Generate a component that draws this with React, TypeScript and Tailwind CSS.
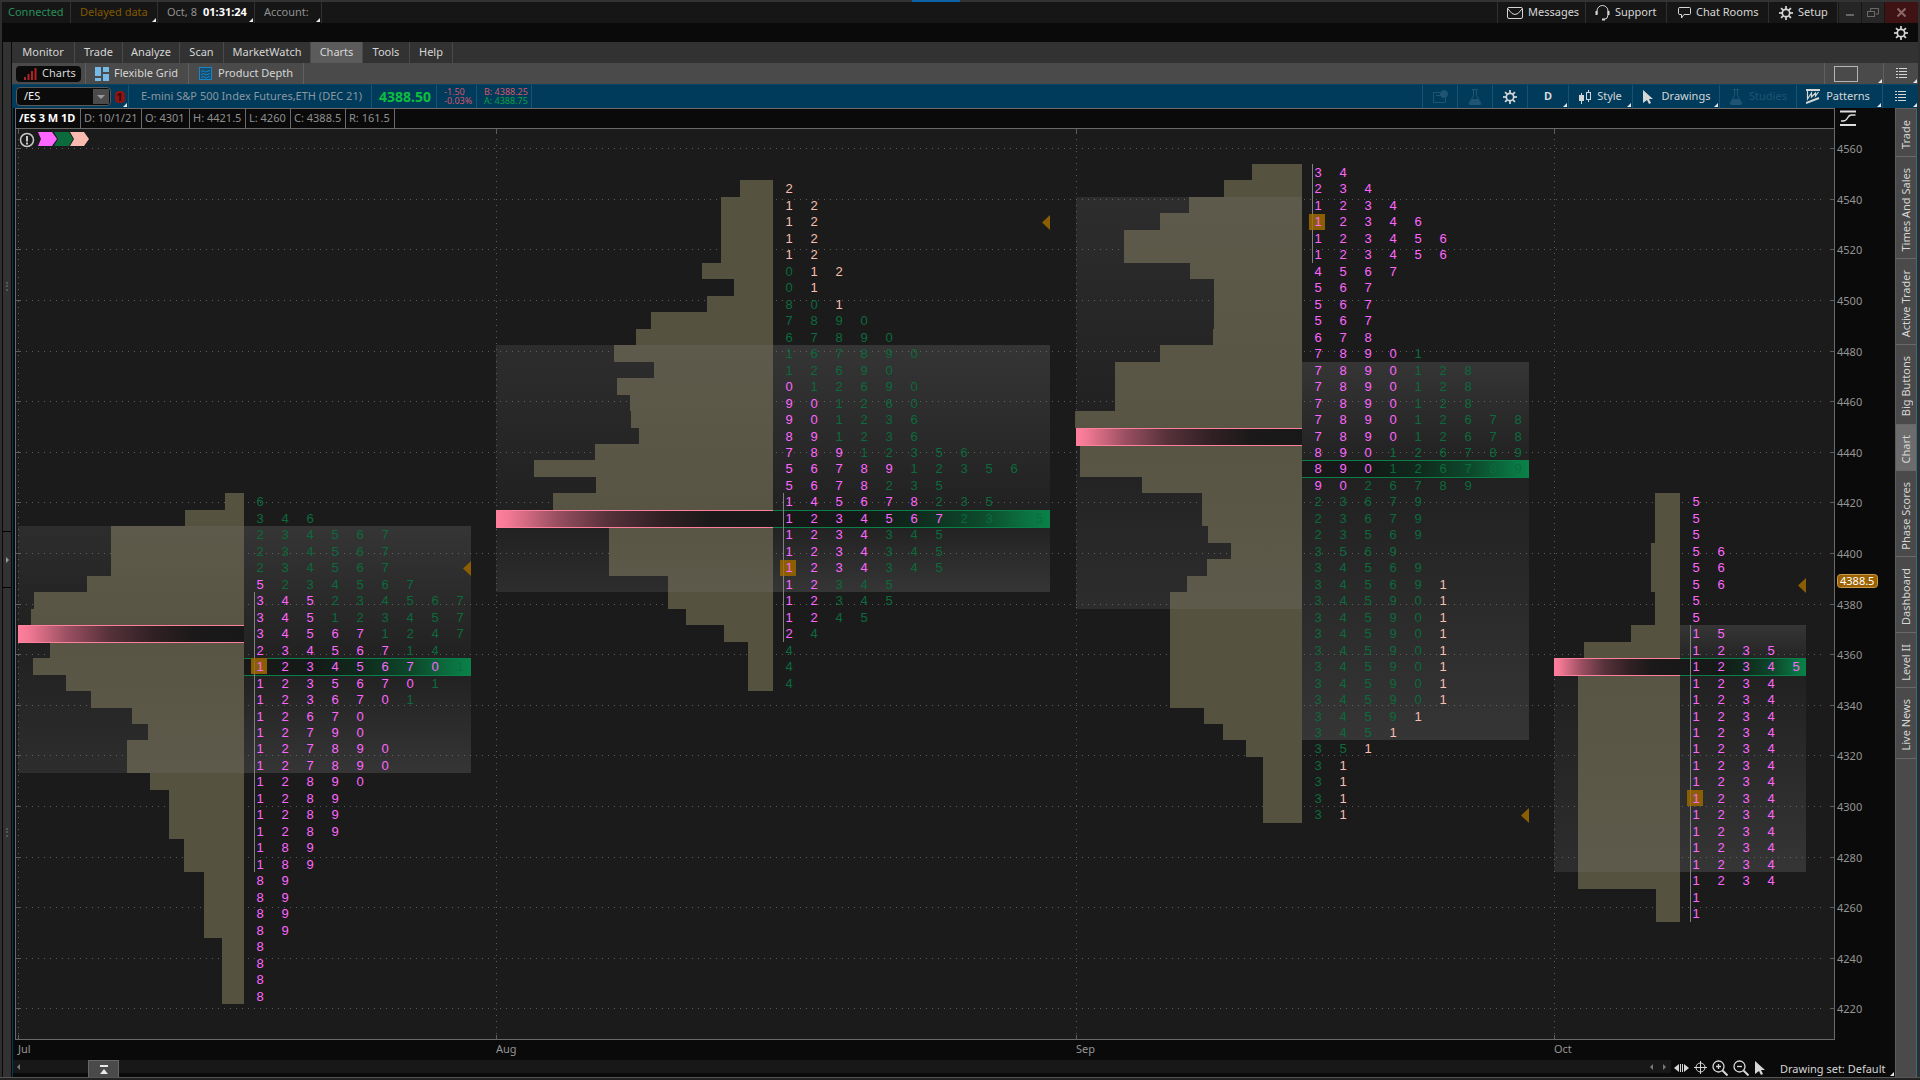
import React from 'react';

const ROW_TOP = 164;
const ROW_H = 16.47;
const rowY = (k: number) => Math.round(ROW_TOP + ROW_H * k);

// [number of rows, left edge of the volume bar]; null is the volume POC row
type Bar = [number, number | null];

// "m" = magenta month digits, "g" = green, "p" = peach
type Row = [number, string];

interface Profile {
  start: number;
  left: number;
  mid: number;
  right: number;
  bars: Bar[];
  rows: Row[];
  volPoc: number;
  tpoPoc: number;
  volArea: [number, number];
  tpoArea: [number, number];
  digitX: number;
  line: [number, number];
  open: number;
  close: number;
}

const COLORS: Record<string, string> = { m: '#ff66ff', g: '#0b6b3c', p: '#f9bfb0' };

const PROFILES: Profile[] = [
  {
    start: 20, left: 18, mid: 244, right: 471, volPoc: 28, tpoPoc: 30,
    volArea: [22, 37], tpoArea: [22, 37], digitX: 260, line: [26, 43], open: 30, close: 24,
    bars: [[1, 225], [1, 185], [3, 111], [1, 87], [1, 34], [1, 31], [1, null], [1, 50], [1, 33], [1, 66], [1, 91], [1, 132], [1, 148], [2, 127], [1, 150], [3, 169], [2, 184], [4, 204], [4, 222]],
    rows: [[1, 'g6'], [1, 'g346'], [3, 'g234567'], [1, 'm5g234567'], [1, 'm345g234567'], [1, 'm345g123457'], [1, 'm34567g1247'], [1, 'm234567g14'], [1, 'm12345670g1'], [1, 'm1235670g1'], [1, 'm123670g1'], [1, 'm12670'], [1, 'm12790'], [2, 'm127890'], [1, 'm12890'], [3, 'm1289'], [2, 'm189'], [4, 'm89'], [4, 'm8']],
  },
  {
    start: 1, left: 496, mid: 773, right: 1050, volPoc: 21, tpoPoc: 21,
    volArea: [11, 26], tpoArea: [11, 26], digitX: 789, line: [20, 29], open: 24, close: 3,
    bars: [[1, 740], [4, 721], [1, 702], [1, 734], [1, 707], [1, 651], [1, 636], [1, 614], [1, 654], [1, 617], [1, 630], [1, 631], [1, 639], [1, 595], [1, 534], [1, 596], [1, 553], [1, null], [3, 609], [2, 668], [1, 686], [1, 724], [3, 748]],
    rows: [[1, 'p2'], [4, 'p12'], [1, 'g0p12'], [1, 'g0p1'], [1, 'g80p1'], [1, 'g7890'], [1, 'g67890'], [1, 'g167890'], [1, 'g12690'], [1, 'm0g12690'], [1, 'm90g1260'], [1, 'm90g1236'], [1, 'm89g1236'], [1, 'm789g12356'], [1, 'm56789g12356'], [1, 'm5678g235'], [1, 'm145678g235'], [1, 'm1234567g2345'], [3, 'm1234g345'], [2, 'm12g345'], [1, 'm12g45'], [1, 'm2g4'], [3, 'g4']],
  },
  {
    start: 0, left: 1076, mid: 1302, right: 1529, volPoc: 16, tpoPoc: 18,
    volArea: [2, 27], tpoArea: [12, 35], digitX: 1318, line: [0, 6], open: 3, close: 39,
    bars: [[1, 1252], [1, 1224], [1, 1189], [1, 1160], [2, 1124], [1, 1190], [3, 1214], [1, 1213], [1, 1160], [3, 1115], [1, 1075], [1, null], [2, 1080], [1, 1142], [2, 1202], [1, 1208], [1, 1231], [1, 1207], [1, 1187], [7, 1170], [1, 1204], [1, 1223], [1, 1246], [4, 1263]],
    rows: [[1, 'm34'], [1, 'm234'], [1, 'm1234'], [1, 'm12346'], [2, 'm123456'], [1, 'm4567'], [3, 'm567'], [1, 'm678'], [1, 'm7890g1'], [3, 'm7890g128'], [2, 'm7890g12678'], [2, 'm890g126789'], [1, 'm90g26789'], [2, 'g23679'], [1, 'g23569'], [1, 'g3569'], [1, 'g34569'], [1, 'g34569p1'], [7, 'g34590p1'], [1, 'g3459p1'], [1, 'g345p1'], [1, 'g35p1'], [4, 'g3p1']],
  },
  {
    start: 20, left: 1554, mid: 1680, right: 1806, volPoc: 30, tpoPoc: 30,
    volArea: [30, 43], tpoArea: [28, 43], digitX: 1696, line: [28, 46], open: 38, close: 25,
    bars: [[3, 1655], [3, 1651], [2, 1655], [1, 1631], [1, 1584], [1, null], [13, 1578], [2, 1656]],
    rows: [[3, 'm5'], [3, 'm56'], [2, 'm5'], [1, 'm15'], [1, 'm1235'], [1, 'm12345'], [13, 'm1234'], [2, 'm1']],
  },
];

const PRICES = Array.from({ length: 18 }, (_, i) => 4560 - i * 20);
const priceY = (p: number) => Math.round(148.1 + (4560 - p) * 2.53);
const MONTHS = [{ x: 18, name: 'Jul' }, { x: 496, name: 'Aug' }, { x: 1076, name: 'Sep' }, { x: 1554, name: 'Oct' }];

const AreaGradient = ({ id, area, poc, peak }: { id: string; area: [number, number]; poc: number; peak: number }) => {
  const mid = (poc + 0.5 - area[0]) / (area[1] - area[0]);
  return (
    <linearGradient id={id} x1="0" y1="0" x2="0" y2="1">
      <stop offset="0" stopColor="#808080" stopOpacity={peak} />
      <stop offset={mid} stopColor="#808080" stopOpacity={0.05} />
      <stop offset="1" stopColor="#808080" stopOpacity={peak} />
    </linearGradient>
  );
};

const digitsOf = (text: string) => {
  const out: { d: string; color: string }[] = [];
  let color = COLORS.m;
  for (const ch of text) {
    if (COLORS[ch]) color = COLORS[ch];
    else out.push({ d: ch, color });
  }
  return out;
};

const ProfileBars = ({ p }: { p: Profile }) => {
  let k = p.start;
  return (
    <g fill="#565240" shapeRendering="crispEdges">
      {p.bars.map(([n, x], i) => {
        const y = rowY(k);
        k += n;
        return x === null ? null : <rect key={i} x={x} y={y} width={p.mid - x} height={rowY(k) - y} />;
      })}
    </g>
  );
};

const ProfileMarks = ({ p, i }: { p: Profile; i: number }) => {
  const poc = rowY(p.volPoc);
  const tpo = rowY(p.tpoPoc);
  const openY = Math.ceil(ROW_TOP + ROW_H * p.open - 0.2);
  const closeY = rowY(p.close + 0.6);
  let k = p.start;
  return (
    <g>
      <g shapeRendering="crispEdges">
        <rect x={p.left} y={rowY(p.volArea[0])} width={p.mid - p.left} height={rowY(p.volArea[1]) - rowY(p.volArea[0])} fill={`url(#vol${i})`} />
        <rect x={p.mid} y={rowY(p.tpoArea[0])} width={p.right - p.mid} height={rowY(p.tpoArea[1]) - rowY(p.tpoArea[0])} fill={`url(#tpo${i})`} />
        <rect x={p.left} y={poc} width={p.mid - p.left} height={18} fill="#ff7f9d" />
        <rect x={p.left} y={poc + 1} width={p.mid - p.left} height={16} fill="url(#pink)" />
        <rect x={p.mid} y={tpo} width={p.right - p.mid} height={18} fill="#0a8048" />
        <rect x={p.mid} y={tpo + 1} width={p.right - p.mid} height={16} fill="url(#green)" />
        <rect x={p.digitX - 6} y={rowY(p.line[0])} width={1} height={rowY(p.line[1]) - rowY(p.line[0])} fill="#808080" />
        <rect x={p.digitX - 9} y={openY} width={16} height={16} fill="#8b5e04" />
        <rect x={p.digitX - 6} y={openY} width={1} height={16} fill="#9a7227" />
      </g>
      <path d={`M${p.right} ${closeY - 8}v15l-8-7.500z`} fill="#8b5e04" />
      <g fontFamily="'Liberation Sans', Arial, sans-serif" fontSize="13" textAnchor="middle">
        {p.rows.flatMap(([n, text]) =>
          Array.from({ length: n }, () => {
            const row = k++;
            return digitsOf(text).map((c, j) => (
              <text key={`${row}-${j}`} x={p.digitX + j * 25} y={rowY(row) + 13} fill={c.color}>{c.d}</text>
            ));
          })
        )}
      </g>
    </g>
  );
};

const Plot = () => (
  <svg className="block w-full h-full" aria-label="TPO profile chart">
    <defs>
      <linearGradient id="pink">
        <stop offset="0" stopColor="#ff7f9d" />
        <stop offset="0.04" stopColor="#f57a96" />
        <stop offset="0.22" stopColor="#994f60" />
        <stop offset="0.4" stopColor="#57323b" />
        <stop offset="0.6" stopColor="#302024" />
        <stop offset="0.78" stopColor="#1b1919" />
        <stop offset="1" stopColor="#181818" />
      </linearGradient>
      <linearGradient id="green">
        <stop offset="0" stopColor="#181818" />
        <stop offset="0.3" stopColor="#141a17" />
        <stop offset="0.5" stopColor="#10281c" />
        <stop offset="0.75" stopColor="#0d4a2c" />
        <stop offset="0.95" stopColor="#0a7a45" />
        <stop offset="1" stopColor="#0a8048" />
      </linearGradient>
      {PROFILES.map((p, i) => (
        <React.Fragment key={i}>
          <AreaGradient id={`vol${i}`} area={p.volArea} poc={p.volPoc} peak={0.18} />
          <AreaGradient id={`tpo${i}`} area={p.tpoArea} poc={p.tpoPoc} peak={0.26} />
        </React.Fragment>
      ))}
    </defs>
    <g transform="translate(-16 -129)">
      <g stroke="#5c5c5c" shapeRendering="crispEdges">
        {PRICES.map((v) => (
          <g key={v}>
            <line x1="20" x2="1822" y1={priceY(v) + 0.5} y2={priceY(v) + 0.5} strokeDasharray="1 5" />
            <line x1="16" x2="21" y1={priceY(v) + 0.5} y2={priceY(v) + 0.5} />
            <line x1="1830" x2="1834" y1={priceY(v) + 0.5} y2={priceY(v) + 0.5} />
          </g>
        ))}
        {MONTHS.map((m) => (
          <g key={m.name}>
            <line x1={m.x + 0.5} x2={m.x + 0.5} y1="139" y2="1034" strokeDasharray="1 5" />
            <line x1={m.x + 0.5} x2={m.x + 0.5} y1="129" y2="134" />
            <line x1={m.x + 0.5} x2={m.x + 0.5} y1="1035" y2="1039" />
          </g>
        ))}
      </g>
      {PROFILES.map((p, i) => <ProfileBars key={i} p={p} />)}
      {PROFILES.map((p, i) => <ProfileMarks key={i} p={p} i={i} />)}
      <g fill="none" stroke="#c8c8c8" strokeWidth="1.500">
        <circle cx="27" cy="140" r="6.500" />
        <path d="M27 136v5.500M27 142.500v2" strokeWidth="2" />
      </g>
      <path d="M38 132h14l5 7-5 7H38l3-7z" fill="#ff66ff" />
      <path d="M54 132h15l4 7-4 7H54l4-7z" fill="#0b6b3c" />
      <path d="M70 132h14l5 7-5 7H70l4-7z" fill="#f9bbb0" />
    </g>
  </svg>
);

const PriceAxis = () => (
  <svg className="block w-full h-full font-['Noto_Sans',sans-serif]" aria-label="Price axis">
    <g transform="translate(-1835 -108)">
      <path d="M1840 111.500h16M1840 125h16" stroke="#ddd" strokeWidth="2" />
      <path d="M1841 121h2q3 0 4.500-3t4-3h4" fill="none" stroke="#ddd" strokeWidth="1.300" />
      {PRICES.map((v) => (
        <text key={v} x="1837" y={priceY(v) + 5} fontSize="11" fill="#959595">{v}</text>
      ))}
      <rect x="1837.500" y="574.500" width="40" height="13" rx="3" fill="#9c6200" stroke="#c99a4e" />
      <text x="1840" y="585" fontSize="11" fill="#fff">4388.5</text>
    </g>
  </svg>
);

const Gear = () => (
  <svg width="14" height="14" viewBox="0 0 14 14" fill="none" stroke="currentColor">
    <circle cx="7" cy="7" r="3.700" strokeWidth="1.700" />
    {[0, 45, 90, 135, 180, 225, 270, 315].map((a) => (
      <path key={a} d="M7 0v3" strokeWidth="1.700" transform={`rotate(${a} 7 7)`} />
    ))}
  </svg>
);

const Flask = () => (
  <svg width="14" height="16" viewBox="0 0 14 16" fill="none" stroke="currentColor">
    <path d="M4 .5h6M5.500 1v5.500L1 14.500q0 1 1 1h10q1 0 1-1L8.500 6.500V1" />
    <path d="M4 10h6l3 5H1z" fill="currentColor" stroke="none" />
  </svg>
);

const ListIcon = () => (
  <svg width="11" height="11" viewBox="0 0 11 11" fill="currentColor" shapeRendering="crispEdges">
    {[0, 3, 6, 9].map((y) => (
      <g key={y}><rect y={y} width="2" height="1" /><rect x="3" y={y} width="8" height="1" /></g>
    ))}
  </svg>
);

const Cursor = () => (
  <svg width="12" height="14" viewBox="0 0 12 14" fill="currentColor">
    <path d="M1 0l10 9H7l2 4-2 1-2-4-4 3z" />
  </svg>
);

const Corner = () => <span className="absolute right-px bottom-px border-b-4 border-l-4 border-b-gray-200 border-l-transparent" />;

const TOP = 'relative flex h-full items-center border-r border-[#303030]';
const TOOL = 'relative flex h-full items-center justify-center border-l border-[#1a5271]';

const StatusBar = () => (
  <header className="flex h-[21px] shrink-0 items-stretch bg-[#161616]">
    <div className={`${TOP} w-[69px] pl-[6px] text-[#27905a]`}>Connected</div>
    <button className={`${TOP} w-[87px] pl-[9px] text-[#815800]`}>Delayed data<Corner /></button>
    <button className={`${TOP} w-[97px] pl-[9px] text-[#909090]`}>
      Oct, 8<b className="ml-[6px] text-white">01:31:24</b><Corner />
    </button>
    <button className={`${TOP} w-[67px] pl-[9px] text-[#909090]`}>Account:<Corner /></button>
    <div className="flex-1 border-r border-[#303030]" />
    <button className={`${TOP} w-[88px] gap-[5px] pl-[9px]`}>
      <svg width="16" height="12" viewBox="0 0 16 12" fill="none" stroke="currentColor"><rect x=".5" y=".5" width="15" height="11" rx="1.500" /><path d="M1 2l4 4.500q3 2 6 0L15 2" /></svg>
      Messages
    </button>
    <button className={`${TOP} w-[81px] gap-[5px] pl-[9px]`}>
      <svg width="15" height="16" viewBox="0 0 15 16" fill="none" stroke="currentColor"><path d="M2 9V6a5.500 5.500 0 0 1 11 0v4q0 4-4 4.500" /><path d="M1.500 6v4M13.500 6v4" strokeWidth="2" /><path d="M7 14.500h3" strokeWidth="2" /></svg>
      Support
    </button>
    <button className={`${TOP} w-[102px] gap-[5px] pl-[11px]`}>
      <svg width="13" height="12" viewBox="0 0 13 12" fill="none" stroke="currentColor"><path d="M2 .5h9.500q1 0 1 1v5q0 1-1 1H6L3.500 11V7.500H2q-1.500 0-1.500-1v-5q0-1 1.500-1z" /></svg>
      Chat Rooms
    </button>
    <button className={`${TOP} w-[69px] gap-[5px] pl-[10px]`}><Gear />Setup</button>
    <button aria-label="Minimize" className="ml-px flex w-[22px] items-center justify-center bg-[#262626]"><span className="mt-1 h-[2px] w-2 bg-[#666]" /></button>
    <button aria-label="Restore" className="ml-px flex w-[22px] items-center justify-center bg-[#262626] text-[#6a6a6a]">
      <svg width="12" height="10" viewBox="0 0 12 10" fill="none" stroke="currentColor"><path d="M3.500 3V.5h8v5.500H8.500" /><rect x=".5" y="3.500" width="7" height="5" /></svg>
    </button>
    <button aria-label="Close" className="ml-px flex w-[33px] items-center justify-center bg-[#3f1214] text-[#8e6768]">
      <svg width="9" height="9" viewBox="0 0 9 9" stroke="currentColor" strokeWidth="2"><path d="M.5.5l8 8M8.500.5l-8 8" /></svg>
    </button>
  </header>
);

const TABS = [
  { name: 'Monitor', w: 'w-[63px]' },
  { name: 'Trade', w: 'w-[48px]' },
  { name: 'Analyze', w: 'w-[57px]' },
  { name: 'Scan', w: 'w-[44px]' },
  { name: 'MarketWatch', w: 'w-[87px]' },
  { name: 'Charts', w: 'w-[52px]' },
  { name: 'Tools', w: 'w-[47px]' },
  { name: 'Help', w: 'w-[43px]' },
];

const MainTabs = () => (
  <nav className="flex h-[21px] shrink-0 bg-[#323232]">
    {TABS.map((t) => (
      <button key={t.name} className={`${t.w} border-r border-[#4a4a4a] ${t.name === 'Charts' ? 'bg-[#5b5b5b]' : ''}`}>{t.name}</button>
    ))}
  </nav>
);

const SubTabs = () => (
  <nav className="flex h-[21px] shrink-0 items-center bg-[#4a4a4a]">
    <div className="flex h-full w-[74px] items-center border-r border-[#606060] pl-1">
      <button className="flex h-4 w-[65px] items-center gap-[5px] rounded bg-[#0b0b0b] pl-2">
        <svg width="13" height="12" viewBox="0 0 13 12" fill="#b02426"><rect y="9" width="2" height="3" /><rect x="3.500" y="6" width="2" height="6" /><rect x="7" y="3" width="2" height="9" /><rect x="10.500" width="2" height="12" /></svg>
        Charts
      </button>
    </div>
    <button className="flex h-full w-[103px] items-center gap-[5px] border-r border-[#606060] pl-[9px]">
      <svg width="14" height="14" viewBox="0 0 14 14" fill="#74b9e8"><rect width="6" height="9" /><rect x="8" width="6" height="5" /><rect y="11" width="6" height="3" /><rect x="8" y="7" width="6" height="7" /></svg>
      Flexible Grid
    </button>
    <button className="flex h-full w-[115px] items-center gap-[6px] border-r border-[#606060] pl-[10px]">
      <svg width="13" height="13" viewBox="0 0 13 13" fill="none" stroke="#1887c9"><rect x=".5" y=".5" width="12" height="12" fill="#174d6b" /><path d="M2 5l2-1.500L6.500 5 11 3.500M2 8l2-1.500L7 8l4-1.500M2 11l2-1.500 3 1.500 4-1.500" /></svg>
      Product Depth
    </button>
    <div className="flex-1" />
    <button aria-label="Grid layout" className="relative flex h-full w-[59px] items-center border-l border-[#606060] pl-[9px]">
      <span className="h-4 w-6 border border-[#b4b4b4]" /><Corner />
    </button>
    <button aria-label="Layout menu" className="relative flex h-full w-[35px] items-center justify-center border-l border-[#606060]"><ListIcon /><Corner /></button>
  </nav>
);

const Toolbar = () => (
  <div className="flex h-6 shrink-0 items-center border-t border-[#0d4362] bg-[#003b5c]">
    <div className="ml-1 flex h-[19px] w-[95px] rounded-sm border border-[#5a5a5a] bg-[#0b0b0b] p-px">
      <input aria-label="Symbol" defaultValue="/ES" className="min-w-0 flex-1 bg-transparent pl-[6px] text-[11px] text-gray-100 outline-none" />
      <button aria-label="Symbol list" className="flex w-4 items-center justify-center bg-[#4b4b4b]">
        <span className="border-x-4 border-t-4 border-x-transparent border-t-[#999]" />
      </button>
    </div>
    <button className="relative flex h-full w-[18px] items-center justify-center border-r border-[#1a5271]">
      <span className="h-3 w-[10px] rounded-sm bg-[#8e1414] text-center text-[11px] leading-3 font-bold text-[#350808]">1</span><Corner />
    </button>
    <div className="flex h-full w-[243px] items-center border-r border-[#1a5271] pl-3 whitespace-nowrap text-[#8b969e]">E-mini S&amp;P 500 Index Futures,ETH (DEC 21)</div>
    <div className="flex h-full w-[65px] items-center border-r border-[#1a5271] pl-[7px] text-sm font-bold text-[#0dbf3c]">4388.50</div>
    <div className="h-full w-10 border-r border-[#1a5271] pt-[2px] pl-[7px] text-[9px] leading-[9px] text-[#d65565]">-1.50<br />-0.03%</div>
    <div className="h-full w-[55px] border-r border-[#1a5271] pt-[2px] pl-[7px] text-[9px] leading-[9px] text-[#d65565]">B: 4388.25<br /><span className="text-[#0ba13f]">A: 4388.75</span></div>
    <div className="flex-1" />
    <button aria-label="Alerts" className={`${TOOL} w-[35px] text-[#1f5473]`}>
      <svg width="15" height="13" viewBox="0 0 15 13" fill="none" stroke="currentColor"><path d="M7 2.500H.5v10h12V8" /><circle cx="11" cy="4" r="3.500" fill="currentColor" /><path d="M3 5.500h5" /></svg>
    </button>
    <button aria-label="Lab" className={`${TOOL} w-[35px] text-[#1f5473]`}><Flask /></button>
    <button aria-label="Settings" className={`${TOOL} w-[35px]`}><Gear /></button>
    <button className={`${TOOL} w-[41px] text-[11px] font-bold`}>D<Corner /></button>
    <button className={`${TOOL} w-[64px] gap-[6px]`}>
      <svg width="12" height="14" viewBox="0 0 12 14" fill="none" stroke="currentColor"><rect x=".5" y="5.500" width="4" height="5" fill="currentColor" /><path d="M2.500 3v11M9.500 0v2.500M9.500 9.500V12" /><rect x="7.500" y="2.500" width="4" height="7" /></svg>
      Style<Corner />
    </button>
    <button className={`${TOOL} w-[87px] gap-2`}><Cursor />Drawings<Corner /></button>
    <button className={`${TOOL} w-[77px] gap-[6px] text-[#1f5473]`} disabled><Flask />Studies</button>
    <button className={`${TOOL} w-[86px] gap-[6px] pr-[3px]`}>
      <svg width="14" height="15" viewBox="0 0 14 15" fill="none" stroke="currentColor"><path d="M0 1h14M0 14l13-5" strokeWidth="2" /><path d="M1.500 2v8l4-6v4l4-4v3l3-4" strokeWidth="1.200" /></svg>
      Patterns<Corner />
    </button>
    <button aria-label="Chart menu" className={`${TOOL} w-9`}><ListIcon /><Corner /></button>
  </div>
);

const QUOTE = [
  { t: 'D: 10/1/21', w: 'w-[61px]' },
  { t: 'O: 4301', w: 'w-[48px]' },
  { t: 'H: 4421.5', w: 'w-[56px]' },
  { t: 'L: 4260', w: 'w-[45px]' },
  { t: 'C: 4388.5', w: 'w-[55px]' },
  { t: 'R: 161.5', w: 'w-[49px]' },
];

const QuoteRow = () => (
  <div className="flex h-[21px] shrink-0 border-y border-[#6a6a6a] bg-[#0a0a0a] text-[11px] leading-[18px] text-[#909090]">
    <div className="w-[65px] border-r border-[#6a6a6a] pl-[3px] font-bold whitespace-nowrap text-white">/ES 3 M 1D</div>
    {QUOTE.map((q) => (
      <div key={q.t} className={`${q.w} border-r border-[#6a6a6a] pl-[3px] whitespace-nowrap`}>{q.t}</div>
    ))}
  </div>
);

const SIDE = [
  { name: 'Trade', h: 'h-[48px]' },
  { name: 'Times And Sales', h: 'h-[102px]' },
  { name: 'Active Trader', h: 'h-[86px]' },
  { name: 'Big Buttons', h: 'h-[80px]' },
  { name: 'Chart', h: 'h-[46px]' },
  { name: 'Phase Scores', h: 'h-[86px]' },
  { name: 'Dashboard', h: 'h-[76px]' },
  { name: 'Level II', h: 'h-[55px]' },
  { name: 'Live News', h: 'h-[71px]' },
];

const SideTabs = () => (
  <nav className="flex w-[22px] shrink-0 flex-col border-x border-t border-[#5e5e5e] bg-[#4a4a4a]">
    {SIDE.map((s) => (
      <button key={s.name} className={`${s.h} flex shrink-0 items-center justify-center border-b border-[#686868] pt-1 ${s.name === 'Chart' ? 'bg-[#6c6c6c]' : ''}`}>
        <span className="rotate-180 text-[11px] leading-5 whitespace-nowrap [writing-mode:vertical-rl]">{s.name}</span>
      </button>
    ))}
  </nav>
);

const BottomBar = () => (
  <div className="flex h-[17px] shrink-0 items-start bg-[#0a0a0a]">
    <div className="flex h-[13px] flex-1 items-center bg-[#181818] pl-1">
      <button aria-label="Scroll left" className="border-y-3 border-r-3 border-y-transparent border-r-[#777]" />
      <button aria-label="Expand" className="ml-[68px] flex h-[17px] w-[31px] items-center justify-center self-start border border-b-0 border-[#666] bg-[#4a4a4a]">
        <svg width="8" height="9" viewBox="0 0 8 9" fill="#e8e8e8"><rect width="8" height="2" /><path d="M4 4l4 5H0z" /></svg>
      </button>
      <div className="flex-1" />
      <button aria-label="Back" className="mr-[10px] border-y-3 border-r-3 border-y-transparent border-r-[#777]" />
      <button aria-label="Forward" className="mr-[5px] border-y-3 border-l-3 border-y-transparent border-l-[#777]" />
    </div>
    <div className="ml-[3px] flex h-[15px] items-center gap-[5px]">
      <svg width="15" height="10" viewBox="0 0 15 10" fill="currentColor"><path d="M0 5l5-4v8zM15 5l-5-4v8zM6 1h1v8H6zM8 1h1v8H8z" /></svg>
      <svg width="13" height="13" viewBox="0 0 13 13" fill="none" stroke="currentColor"><circle cx="6.500" cy="6.500" r="4.500" /><path d="M6.500 0v13M0 6.500h13" /></svg>
      <svg width="16" height="16" viewBox="0 0 16 16" fill="none" stroke="currentColor" strokeWidth="1.300"><circle cx="6.500" cy="6.500" r="5.500" /><path d="M4 6.500h5M6.500 4v5" /><path d="M10.500 10.500l5 5" strokeWidth="2" /></svg>
      <svg width="16" height="16" viewBox="0 0 16 16" fill="none" stroke="currentColor" strokeWidth="1.300"><circle cx="6.500" cy="6.500" r="5.500" /><path d="M4 6.500h5" /><path d="M10.500 10.500l5 5" strokeWidth="2" /></svg>
      <Cursor />
    </div>
    <button className="relative ml-[14px] h-[17px] w-[115px] text-left text-[11px] leading-[14px] whitespace-nowrap">Drawing set: Default<Corner /></button>
  </div>
);

const App = () => (
  <div className="relative flex h-screen w-full flex-col overflow-hidden bg-[#0a0a0a] font-['Noto_Sans',sans-serif] text-[11px] text-[#d6d6d6]">
    <div className="absolute top-0 left-1/2 h-[2px] w-12 -translate-x-full bg-[#0a62a8]" />
    <div className="h-[2px] shrink-0 bg-[#333]" />
    <div className="flex min-h-0 flex-1 border-x-2 border-[#2e2e2e]">
      <div className="flex min-w-0 flex-1 flex-col">
        <StatusBar />
        <div className="flex h-[19px] shrink-0 items-center justify-end pr-[10px]">
          <button aria-label="Gadget settings"><Gear /></button>
        </div>
        <div className="flex min-h-0 flex-1">
          <div className="ml-px flex w-2 shrink-0 flex-col bg-[#323232]">
            <div className="flex h-[490px] items-center justify-center border-b border-black"><span className="h-[9px] border-l-2 border-dotted border-[#555]" /></div>
            <div className="flex h-14 items-center justify-center border-b border-black">
              <span className="border-y-3 border-l-3 border-y-transparent border-l-[#999]" />
            </div>
            <div className="flex flex-1 items-center justify-center"><span className="h-[9px] border-l-2 border-dotted border-[#555]" /></div>
          </div>
          <div className="ml-px flex min-w-0 flex-1 flex-col">
            <MainTabs />
            <SubTabs />
            <Toolbar />
            <div className="flex min-h-0 flex-1 border-l border-[#003b5c]">
              <div className="flex min-w-0 flex-1 flex-col">
                <div className="flex min-h-0 flex-1 pl-[2px]">
                  <div className="flex min-w-0 flex-1 flex-col border-x border-b border-[#6a6a6a] bg-[#1b1b1b]">
                    <QuoteRow />
                    <div className="min-h-0 flex-1"><Plot /></div>
                  </div>
                  <div className="w-[60px] shrink-0"><PriceAxis /></div>
                </div>
                <svg className="block h-5 w-full shrink-0" aria-label="Time axis">
                  {MONTHS.map((m) => (
                    <text key={m.name} x={m.x - 13} y="13" fontSize="11" fill="#959595">{m.name}</text>
                  ))}
                </svg>
                <BottomBar />
              </div>
              <SideTabs />
              <div className="w-px bg-[#003b5c]" />
            </div>
          </div>
        </div>
      </div>
    </div>
    <div className="h-[3px] shrink-0 border-t border-[#555] bg-[#222]" />
  </div>
);

export default App;
